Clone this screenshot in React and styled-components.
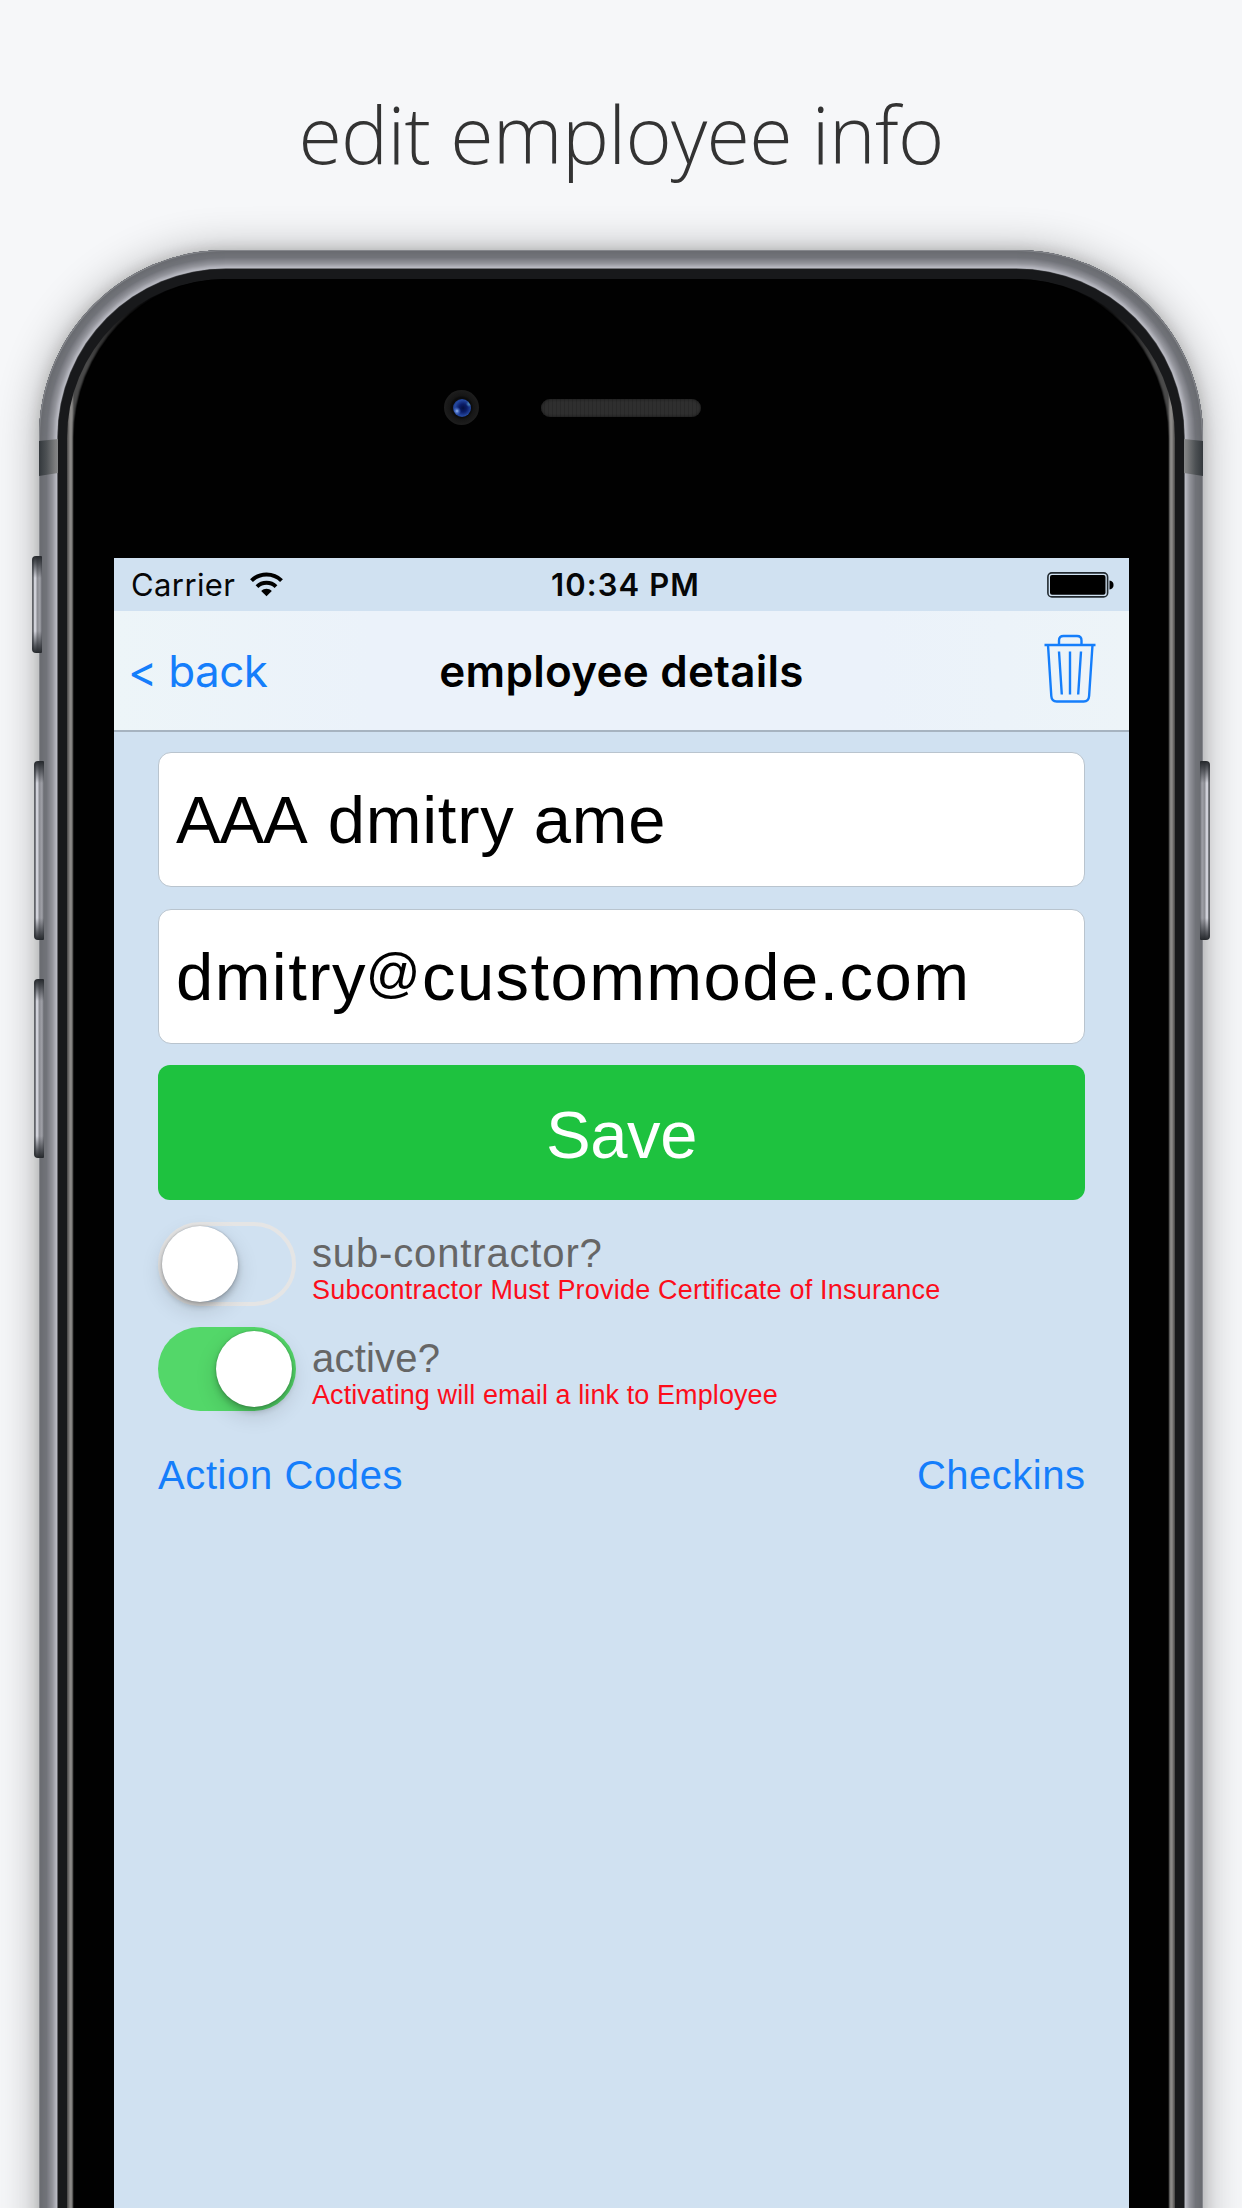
import React from "react";
import styled, { createGlobalStyle, css } from "styled-components";

const GlobalStyle = createGlobalStyle`
  * { box-sizing: border-box; }
  body { margin: 0; background: #f6f7f9; }
`;

const mix = (a, b, t) => a.map((v, i) => Math.round(v + (b[i] - v) * t));

/* Space-grey metal: one ring per pixel, from the outer edge inwards. */
const metalStops = [
  [0, [132, 134, 139]],
  [1, [106, 108, 113]],
  [7, [113, 115, 121]],
  [13, [148, 149, 156]],
  [17, [184, 185, 193]],
  [19, [150, 151, 156]],
];
const metalAt = (p) => {
  const i = metalStops.findIndex(([pos]) => pos >= p);
  if (i <= 0) return metalStops[0][1];
  const [p0, c0] = metalStops[i - 1];
  const [p1, c1] = metalStops[i];
  return mix(c0, c1, (p - p0) / (p1 - p0));
};
const metalRings = Array.from(
  { length: 20 },
  (_, i) => `inset 0 0 0 ${i + 1}px rgb(${metalAt(Math.min(i, 19)).join(",")})`
).join(", ");

const Page = styled.main`
  height: 2208px;
  overflow: hidden;
  display: flex;
  flex-direction: column;
  align-items: center;
  background: #f6f7f9;
  font-family: "Liberation Sans", Arial, sans-serif;
`;

const Headline = styled.h1`
  flex: none;
  margin: 0;
  height: 250px;
  padding-top: 80px;
  font: 300 79px/108px "Open Sans", sans-serif;
  letter-spacing: ${(p) => p.$spacing}px;
  color: #333;
  white-space: nowrap;
`;

const Phone = styled.div`
  position: relative;
  flex: none;
  width: 1164px;
  height: 2300px;
  padding: 19px;
  border-radius: 187px;
  background: #18191b;
  box-shadow: ${metalRings}, 0 0 14px rgba(0, 0, 0, 0.16), 0 2px 44px rgba(0, 0, 0, 0.3);
`;

const Rim = styled.div`
  height: 100%;
  padding: 10px 9px;
  border-radius: 168px;
  background: #18191b;
  box-shadow: 0 0 0 0.6px #3a3b3e;
`;

const Highlight = styled.div`
  height: 100%;
  padding: 0 7px;
  border-radius: 159px;
  overflow: hidden;
  background:
    linear-gradient(180deg, #0c0c0d 0, #0c0c0d 20px, rgba(12, 12, 13, 0) 85px),
    linear-gradient(90deg, #454545 0, #5c5a59 1px, #8b8987 3px, #8b8987 5px, #4a4a4a 7px, #4a4a4a calc(100% - 7px), #8b8987 calc(100% - 5px), #8b8987 calc(100% - 3px), #5c5a59 calc(100% - 1px), #454545 100%);
`;

const Glass = styled.div`
  height: 100%;
  padding: 279px 40px 0;
  border-radius: 152px / 159px;
  background: #010101;
  box-shadow: 0 0 2px 0.5px #000;
`;

const edgeSide = css`
  ${(p) => (p.$right ? "right" : "left")}: ${(p) => p.$offset}px;
`;

const AntennaBand = styled.span`
  position: absolute;
  top: 189px;
  ${edgeSide}
  width: 19px;
  height: 37px;
  background: linear-gradient(${(p) => (p.$right ? "270deg" : "90deg")}, #33383c, #4d5154 40%, #7c7d7e 85%, #868788);
  clip-path: ${(p) =>
    p.$right
      ? "polygon(0 0, 100% 2px, 100% 100%, 0 34px)"
      : "polygon(0 2px, 100% 0, 100% 34px, 0 100%)"};
`;

const SideKey = styled.span`
  position: absolute;
  top: ${(p) => p.$top}px;
  ${edgeSide}
  width: 10px;
  height: ${(p) => p.$height}px;
  border-radius: ${(p) => (p.$right ? "1px 4px 4px 1px" : "4px 1px 1px 4px")};
  background:
    linear-gradient(180deg, #25282c 0, rgba(50, 53, 58, 0.75) 8px, rgba(90, 92, 98, 0) 22px, rgba(90, 92, 98, 0) calc(100% - 22px), rgba(50, 53, 58, 0.75) calc(100% - 8px), #25282c 100%),
    linear-gradient(${(p) => (p.$right ? "270deg" : "90deg")}, #55575c 0, #7b7d83 1.5px, #d0d1d9 2px, #d0d1d9 4px, #8a8b91 5px, #a0a1a8 8px, #67696f 10px);
`;

const Camera = styled.span`
  position: absolute;
  top: 140px;
  left: 405px;
  width: 35px;
  height: 35px;
  border-radius: 50%;
  background: radial-gradient(circle, #0c0c0c 0 10px, #161616 12px, #1d1d1d 17px);
  display: grid;
  place-items: center;
`;

const Lens = styled.span`
  width: 18px;
  height: 18px;
  border-radius: 50%;
  background:
    radial-gradient(circle at 4px 12px, #9dbcf0 0, rgba(90, 130, 220, 0.6) 2px, transparent 4px),
    radial-gradient(circle at 16px 5px, #4f8bb8 0, transparent 3px),
    radial-gradient(circle at 10px 9px, #04103f 0, #0b1d68 4px, #2448a0 8px, #1f3c88 10px);
`;

const Speaker = styled.span`
  position: absolute;
  top: 149px;
  left: 502px;
  width: 160px;
  height: 18px;
  border-radius: 9px;
  background: repeating-linear-gradient(90deg, #2f2f2f 0 3px, #292929 3px 4px);
  box-shadow: inset 0 0 3px #151515;
`;

const Screen = styled.section`
  width: 1015px;
  height: 1700px;
  background: #d0e1f1;
`;

const StatusBar = styled.div`
  height: 53px;
  padding: 0 15px 0 17px;
  display: grid;
  grid-template-columns: 1fr auto 1fr;
  align-items: center;
  font: 400 31px/53px Inter, sans-serif;
  color: #060708;
`;

const Carrier = styled.div`
  display: flex;
  align-items: center;
  gap: 15px;
  letter-spacing: ${(p) => p.$spacing}px;
`;

const Clock = styled.div`
  padding-left: 6px;
  font-weight: 600;
  letter-spacing: ${(p) => p.$spacing}px;
`;

const BatterySlot = styled.div`
  display: flex;
  justify-content: flex-end;
`;

const NavBar = styled.header`
  height: 121px;
  padding: 0 16px;
  display: grid;
  grid-template-columns: 1fr auto 1fr;
  align-items: center;
  border-bottom: 2px solid #a6b3c0;
  background: linear-gradient(90deg, #edf5f8, #ebf2fa 25%, #ebf2fa 75%, #edf4f8);
  font-family: Inter, sans-serif;
`;

const BackLink = styled.a`
  margin-left: -2px;
  font-size: 44px;
  line-height: 60px;
  letter-spacing: ${(p) => p.$spacing}px;
  color: #157efb;
`;

const NavTitle = styled.h2`
  margin: 0;
  font-size: 44px;
  line-height: 60px;
  font-weight: 600;
  letter-spacing: ${(p) => p.$spacing}px;
  color: #000;
`;

const TrashButton = styled.button`
  justify-self: end;
  display: flex;
  padding: 0;
  border: 0;
  background: none;
  margin: -4px 17px 0 0;
`;

const Form = styled.div`
  padding: 20px 44px 0;
  display: flex;
  flex-direction: column;
`;

const Field = styled.div`
  height: 135px;
  margin-bottom: 21.5px;
  padding: 0 17px;
  border: 1.5px solid #b9c4ce;
  border-radius: 13px;
  background: #fff;
  font-size: 67px;
  line-height: 134px;
  letter-spacing: ${(p) => p.$spacing}px;
  color: #000;
  white-space: nowrap;
`;

const AtSign = styled.span`
  margin-left: -1px;
  font-size: 54px;
  line-height: 0;
  vertical-align: 9px;
`;

const Initials = styled.span`
  letter-spacing: -1.2px;
  margin-right: 2px;
`;

const SaveButton = styled.button`
  height: 135px;
  padding: 4px 0 0;
  border: 0;
  border-radius: 12px;
  background: #1ec23f;
  color: #fff;
  font: 400 67px/80px "Liberation Sans", Arial, sans-serif;
  letter-spacing: ${(p) => p.$spacing}px;
`;

const Options = styled.div`
  padding-top: 22px;
  display: grid;
  gap: 21px;
`;

const Option = styled.div`
  height: 84px;
  display: flex;
  gap: 16px;
`;

const Track = styled.div`
  flex: none;
  width: 138px;
  height: 84px;
  padding: ${(p) => (p.$on ? "4px" : "0")};
  display: flex;
  align-items: center;
  justify-content: ${(p) => (p.$on ? "flex-end" : "flex-start")};
  border: ${(p) => (p.$on ? "0" : "4px solid #e5e5e5")};
  border-radius: 42px;
  background: ${(p) => (p.$on ? "#53d769" : "transparent")};
`;

const Knob = styled.div`
  width: 76px;
  height: 76px;
  border-radius: 50%;
  background: #fff;
  box-shadow: 0 0 2px rgba(0, 0, 0, 0.25), 0 4px 6px rgba(0, 0, 0, 0.22), 0 8px 22px rgba(0, 0, 0, 0.14);
`;

const OptionText = styled.div`
  padding-top: 9px;
  white-space: nowrap;
`;

const OptionLabel = styled.div`
  font-size: 40px;
  line-height: 44px;
  letter-spacing: ${(p) => p.$spacing}px;
  color: #666;
`;

const OptionNote = styled.div`
  font-size: 27px;
  line-height: 30px;
  letter-spacing: ${(p) => p.$spacing}px;
  color: #fc0d1b;
`;

const LinkRow = styled.div`
  padding-top: 41px;
  display: flex;
  justify-content: space-between;
`;

const TextLink = styled.a`
  font-size: 40px;
  line-height: 46px;
  letter-spacing: ${(p) => p.$spacing}px;
  margin-right: ${(p) => -p.$spacing}px;
  color: #157efb;
`;

const WifiIcon = () => (
  <svg width="33" height="25" viewBox="0 0 33 25" fill="none" stroke="#000" strokeWidth="4">
    <path d="M1.5 8.6C9.6 .4 23.4 .4 31.5 8.6" />
    <path d="M7 14.6c5.2-5 13.8-5 19 0" />
    <path d="M11.2 19c3-3 7.600-3 10.600 0L16.500 24.300z" fill="#000" stroke="none" />
  </svg>
);

const BatteryIcon = () => (
  <svg width="67" height="26" viewBox="0 0 67 26">
    <rect x=".9" y=".9" width="59.700" height="24" rx="4" fill="none" stroke="#222a30" strokeWidth="1.600" />
    <rect x="3" y="3" width="55.500" height="19.800" rx="2" />
    <path d="M62.500 8.500c5.400 0 5.400 9 0 9z" />
  </svg>
);

const TrashIcon = () => (
  <svg width="52" height="70" viewBox="0 0 52 70" fill="none" stroke="#157efb" strokeWidth="2.400">
    <path d="M.5 11H51.500M15 11V6.500q0-4.500 4.500-4.500h13.500q4.500 0 4.500 4.500V11" />
    <path d="M4 11l3.300 51q.4 5.500 5.400 5.500h27q5 0 5.400-5.500L48.500 11" />
    <path d="M15 17.500l2.800 43M26 17.500v43M37 17.500l-2.800 43" />
  </svg>
);

const options = [
  {
    label: "sub-contractor?",
    labelSpacing: 0.85,
    note: "Subcontractor Must Provide Certificate of Insurance",
    noteSpacing: 0.2,
    on: false,
  },
  {
    label: "active?",
    labelSpacing: 0.2,
    note: "Activating will email a link to Employee",
    noteSpacing: 0.09,
    on: true,
  },
];

export default function App() {
  return (
    <Page>
      <GlobalStyle />
      <Headline $spacing={-0.7}>edit employee info</Headline>
      <Phone>
        <Rim>
          <Highlight>
            <Glass>
              <Screen>
                <StatusBar>
                  <Carrier $spacing={0.4}>
                    Carrier
                    <WifiIcon />
                  </Carrier>
                  <Clock $spacing={1.1}>10:34 PM</Clock>
                  <BatterySlot>
                    <BatteryIcon />
                  </BatterySlot>
                </StatusBar>
                <NavBar>
                  <BackLink $spacing={-0.6}>&lt; back</BackLink>
                  <NavTitle $spacing={0.24}>employee details</NavTitle>
                  <TrashButton aria-label="Delete employee">
                    <TrashIcon />
                  </TrashButton>
                </NavBar>
                <Form>
                  <Field $spacing={0.7}>
                    <Initials>AAA</Initials> dmitry ame
                  </Field>
                  <Field $spacing={1.4}>
                    dmitry<AtSign>@</AtSign>custommode.com
                  </Field>
                  <SaveButton $spacing={-0.4}>Save</SaveButton>
                  <Options>
                    {options.map((o) => (
                      <Option key={o.label}>
                        <Track $on={o.on}>
                          <Knob />
                        </Track>
                        <OptionText>
                          <OptionLabel $spacing={o.labelSpacing}>{o.label}</OptionLabel>
                          <OptionNote $spacing={o.noteSpacing}>{o.note}</OptionNote>
                        </OptionText>
                      </Option>
                    ))}
                  </Options>
                  <LinkRow>
                    <TextLink $spacing={0.6}>Action Codes</TextLink>
                    <TextLink $spacing={0.5}>Checkins</TextLink>
                  </LinkRow>
                </Form>
              </Screen>
            </Glass>
          </Highlight>
        </Rim>
        <Camera>
          <Lens />
        </Camera>
        <Speaker />
        <AntennaBand $offset={0} />
        <AntennaBand $right $offset={0} />
        <SideKey $offset={-7} $top={306} $height={97} />
        <SideKey $offset={-5} $top={511} $height={179} />
        <SideKey $offset={-5} $top={729} $height={179} />
        <SideKey $right $offset={-7} $top={511} $height={179} />
      </Phone>
    </Page>
  );
}
